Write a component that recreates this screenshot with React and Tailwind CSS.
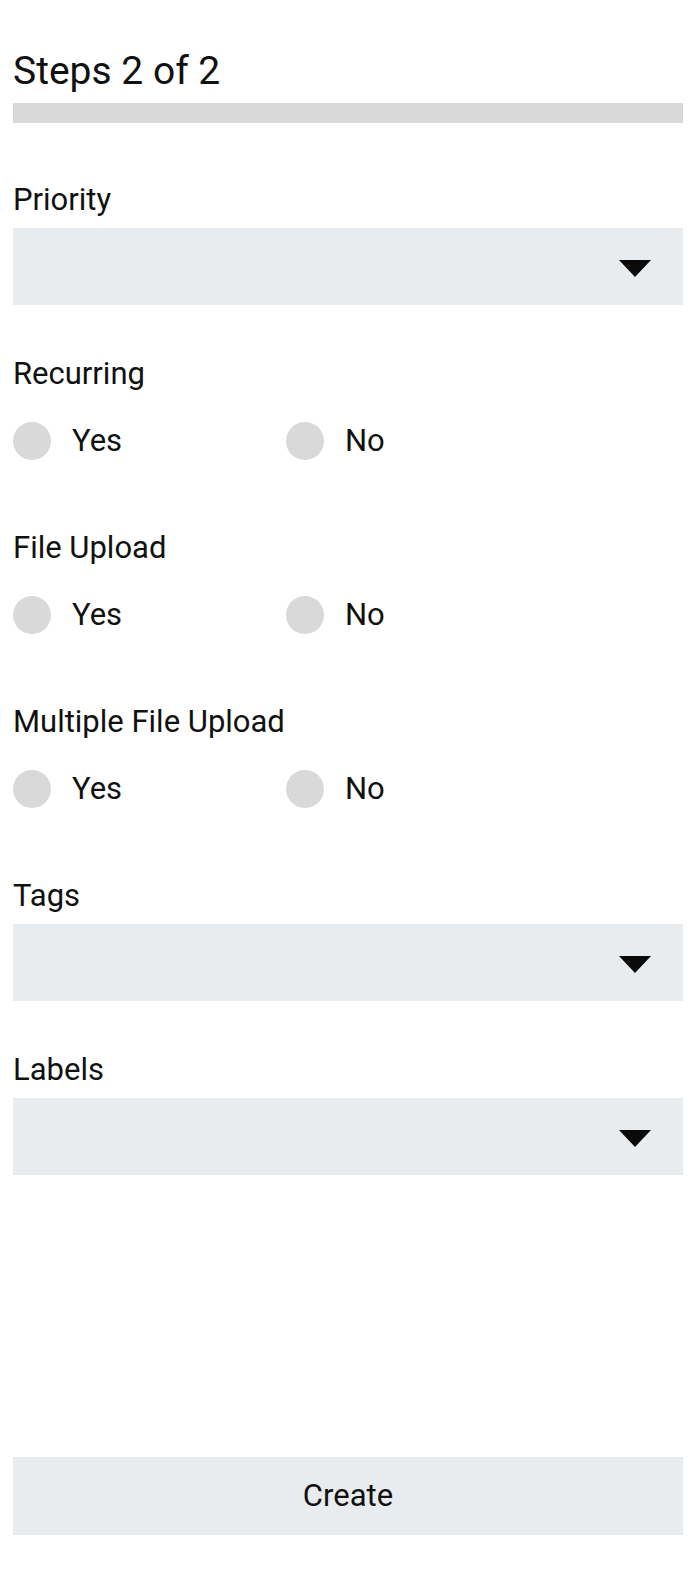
import React from "react";

const Caret = () => (
    <svg width="32" height="17" viewBox="0 0 32 17" className="mr-[32px] mt-[3px]">
        <polygon points="0,0 32,0 16,17" fill="#0a0a0a" />
    </svg>
)

const SelectField = ({ label }) => (
    <div className="flex flex-col">
        <label className="pt-[2px] text-[31px] leading-[36px] text-[#111]">{label}</label>
        <div className="mt-[10px] h-[77px] bg-[#e9ecef] flex items-center justify-end">
            <Caret />
        </div>
    </div>
)

const RadioOption = ({ text, className = "" }) => (
    <label className={`flex items-center gap-[21px] ${className}`}>
        <span className="size-[38px] rounded-full bg-[#d9d9d9]" />
        <span className="text-[31px] leading-[36px] text-[#111]">{text}</span>
    </label>
)

const RadioField = ({ label }) => (
    <div className="flex flex-col">
        <span className="pt-[2px] text-[31px] leading-[36px] text-[#111]">{label}</span>
        <div className="mt-[10px] h-[77px] flex items-center">
            <RadioOption text="Yes" className="w-[273px]" />
            <RadioOption text="No" />
        </div>
    </div>
)

export default function App() {
    return (
        <div className="h-[1584px] bg-white px-[13px] flex flex-col font-['Roboto',sans-serif]">
            {/* header */}
            <h1 className="pt-[48px] text-[39px] leading-[46px] font-normal text-[#111]">Steps 2 of 2</h1>
            <div className="mt-[9px] h-[20px] bg-[#d9d9d9]" />

            {/* fields */}
            <div className="mt-[57px] flex flex-col gap-[49px]">
                <SelectField label="Priority" />
                <RadioField label="Recurring" />
                <RadioField label="File Upload" />
                <RadioField label="Multiple File Upload" />
                <SelectField label="Tags" />
                <SelectField label="Labels" />
            </div>

            <button className="mt-auto mb-[49px] h-[78px] bg-[#e9ecef] text-[31px] text-[#111]">
                Create
            </button>
        </div>
    )
}
